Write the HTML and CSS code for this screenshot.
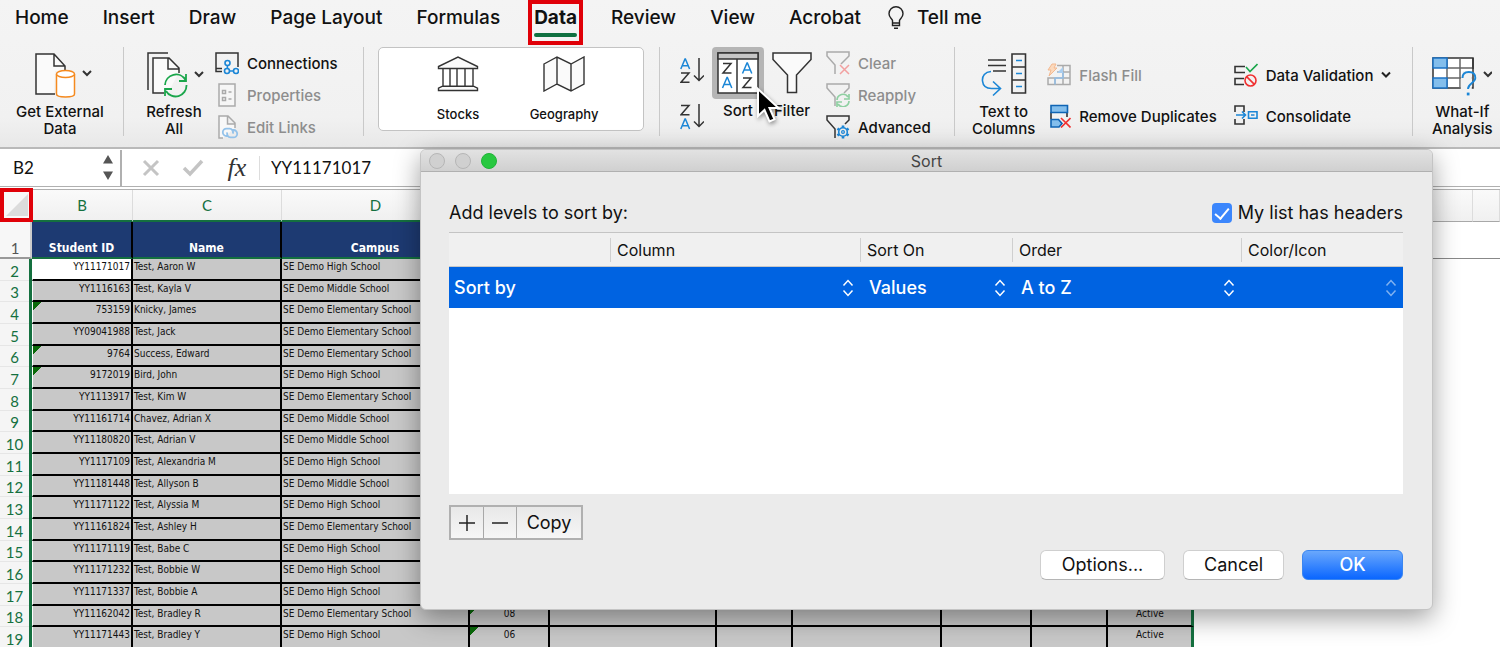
FILE: index.html
```html
<!DOCTYPE html>
<html lang="en">
<head>
<meta charset="utf-8">
<title>Sort</title>
<link rel="stylesheet" href="styles.css">
</head>
<body>
<header class="ribbon">
  <nav class="tabs">
    <button class="tab">Home</button>
    <button class="tab">Insert</button>
    <button class="tab">Draw</button>
    <button class="tab">Page Layout</button>
    <button class="tab">Formulas</button>
    <button class="tab active">Data</button>
    <button class="tab">Review</button>
    <button class="tab">View</button>
    <button class="tab">Acrobat</button>
    <button class="tab tell"><svg width="18" height="24" viewBox="0 0 18 24" fill="none" stroke="#222" stroke-width="1.4"><path d="M5.5 17v-2.500C5 12.500 2 11.500 2 7.800a7 7 0 0 1 14 0c0 3.700-3 4.700-3.500 6.700V17zM5.500 17v2.500h7V17M7 22.300h4"/></svg>Tell me</button>
  </nav>
  <div class="groups">
    <section class="group g-external">
      <button class="big">
        <svg width="58" height="46" viewBox="0 0 58 46" fill="none" stroke="#333" stroke-width="1.5"><path d="M19 42H1V2h18l11 11v6H20" fill="#fafafa" stroke="none"/><path d="M20 42H1V2h18l11 12v4M19 2v12h11"/><path d="M21.500 22v20c0 4 18 4 18 0V22" fill="#fff" stroke="#f58a1f"/><ellipse cx="30.500" cy="22" rx="9" ry="3.500" fill="#fff" stroke="#f58a1f"/><path d="m48 19 4 4 4-4" stroke-width="2"/></svg>
        <span>Get External<br>Data</span>
      </button>
    </section>
    <section class="group g-refresh">
      <button class="big">
        <svg width="58" height="46" viewBox="0 0 58 46" fill="none" stroke="#333" stroke-width="1.500"><path d="M1 38V1h20"/><path d="M21 41H6V6h16l10 10v4L21 41" fill="#fafafa" stroke="none"/><path d="M17 41H6V6h16l10 10v5M21 6v11h11"/><path d="M18 33a11 11 0 0 1 20.500-5M39 22v7h-7M39.500 33A11 11 0 0 1 19 39M18 44v-7h7" stroke="#1aa64b" stroke-width="1.800"/><path d="m48 20 4 4 4-4" stroke-width="2"/></svg>
        <span>Refresh<br>All</span>
      </button>
      <div class="list">
        <button class="small"><svg width="24" height="24" viewBox="0 0 24 24" fill="none" stroke="#333" stroke-width="1.500"><path d="M7 20.500H1V2h22v14M1 17.500h6"/><g stroke="#1b86d6" stroke-width="1.600"><circle cx="12.500" cy="12" r="2.500"/><circle cx="12" cy="20" r="2.500"/><circle cx="21" cy="20" r="2.500"/><path d="M12.400 14.500v3M14.500 20h4"/></g></svg>Connections</button>
        <button class="small" disabled><svg width="24" height="24" viewBox="0 0 24 24" fill="none" stroke="#aaa" stroke-width="1.500"><path d="M4 1h16v22H4z" fill="#f6f6f6"/><path d="M7.500 7.500h3v3h-3zM7.500 14.500h3v3h-3zM13.500 9h3M13.500 16h3"/></svg>Properties</button>
        <button class="small" disabled><svg width="24" height="24" viewBox="0 0 24 24" fill="none" stroke="#aaa" stroke-width="1.500"><path d="M8 23H4V1h9l7 7v5M12.500 1v8H20" fill="#f8f8f8"/><path d="M13 21h-1.500a3.700 3.700 0 0 1 0-7.400h3a3.700 3.700 0 0 1 3.300 5M16.500 15h2a3.700 3.700 0 0 1 0 7.400h-3a3.700 3.700 0 0 1-3.200-5" stroke="#93c2ea" stroke-width="1.800"/></svg>Edit Links</button>
      </div>
    </section>
    <section class="group g-types">
      <div class="gallery">
        <button class="type"><svg width="42" height="36" viewBox="0 0 42 36" fill="#fafafa" stroke="#333" stroke-width="1.400"><path d="M1.500 12.500v-2L21 1l19.500 9.500v2zM6 13v17M13 13v17M20 13v17M28 13v17M36 13v17M1.500 34.500v-2.300l4-2h31l4 2v2.300z"/></svg>Stocks</button>
        <button class="type"><svg width="42" height="36" viewBox="0 0 42 36" fill="#fafafa" stroke="#333" stroke-width="1.400"><path d="M1 8l13-7 14 7 13-7v27l-13 7-14-7-13 7zM14 1v27M28 8v27"/></svg>Geography</button>
      </div>
    </section>
    <section class="group g-sort">
      <div class="quick">
        <button class="az" aria-label="Sort ascending"><svg width="24" height="26" viewBox="0 0 24 26" fill="none" stroke="#333" stroke-width="1.500"><path d="M.8 11 5 1h.4l4.200 10M2.200 7.700h6" stroke="#1b86d6"/><path d="M1 15h8L1 24.300h8.500M19 0v22M14 17.500l5 5 5-5"/></svg></button>
        <button class="az" aria-label="Sort descending"><svg width="24" height="26" viewBox="0 0 24 26" fill="none" stroke="#333" stroke-width="1.500"><path d="M1 1.500h8L1 10.800h8.500M19 0v22M14 17.500l5 5 5-5"/><path d="M.8 25 5 15h.4l4.200 10M2.200 21.700h6" stroke="#1b86d6"/></svg></button>
      </div>
      <button class="tool"><span class="pressed"><svg width="42" height="42" viewBox="0 0 42 42" fill="none" stroke="#333" stroke-width="1.500"><path d="M1 1h40v40H1z" fill="#fff"/><path d="M1 1h40v6H1z" fill="#c6c6c6"/><path d="M20 7v34M6 11.500h8L6 21h8.500M26 26h8l-8 9.500h8.500"/><path d="M5.500 36 10 25.500h.4L14.800 36M7 32.500h6.500M25.500 21.500 30 11h.4l4.400 10.500M27 18h6.500" stroke="#1b86d6"/></svg></span><span>Sort</span></button>
      <button class="tool"><span class="plain"><svg width="40" height="42" viewBox="0 0 40 42" fill="#fafafa" stroke="#333" stroke-width="1.500"><path d="M1 1h38v6.500L24.500 23v17.500h-9V23L1 7.500z"/></svg></span><span>Filter</span></button>
      <div class="list">
        <button class="small" disabled><svg width="24" height="24" viewBox="0 0 24 24" fill="none" stroke="#aaa" stroke-width="1.500"><path d="M9 23v-9L1 5V1h22v4l-8 8"/><path d="m14 14 9 9M23 14l-9 9" stroke="#f2a0a0"/></svg>Clear</button>
        <button class="small" disabled><svg width="24" height="24" viewBox="0 0 24 24" fill="none" stroke="#aaa" stroke-width="1.500"><path d="M9 23v-9L1 5V1h22v4l-5 5"/><path d="M11 17a6 6 0 0 1 11-3M23 11v5h-5M23 18a6 6 0 0 1-11 3M11 24v-5h5" stroke="#8fd0a2" stroke-width="1.700"/></svg>Reapply</button>
        <button class="small"><svg width="24" height="24" viewBox="0 0 24 24" fill="none" stroke="#333" stroke-width="1.500"><path d="M9 23v-9L1 5V1h22v4l-4 4"/><g stroke="#1b86d6"><circle cx="17" cy="17" r="4.300" stroke-width="1.600"/><circle cx="17" cy="17" r="1.400" stroke-width="1.200"/><path d="M17 10.500v2M17 21.500v2M11.400 13.700l1.700 1M20.900 19.300l1.700 1M11.400 20.300l1.700-1M20.900 14.700l1.700-1" stroke-width="2.600"/></g></svg>Advanced</button>
      </div>
    </section>
    <section class="group g-tools">
      <button class="big">
        <svg width="46" height="46" viewBox="0 0 46 46" fill="none" stroke="#333" stroke-width="1.600"><path d="M7 8h18M7 13.500h18M12 19h13M31 2h13.500v39H31zM31 15h13.500M31 28h13.500" /><path d="M35 8.500h6M35 21.500h6M35 34.500h6M10 19.500C4 20 1 24 1.500 29s4 7.500 9 7.500h8.500M12 29.500l7.500 7-7.500 7" stroke="#1b86d6"/></svg>
        <span>Text to<br>Columns</span>
      </button>
      <div class="list pair">
        <button class="small" disabled><svg width="24" height="24" viewBox="0 0 24 24" fill="none" stroke="#aaa" stroke-width="1.500"><path d="M10 2.500h13v19H1V15h22M8 15v6.500M16 2.500v19M10 9h13"/><path d="M8 21.500V15h8V9" stroke="#93bfe8"/><path d="m10 10 6-6v6z" fill="#a9cdef" stroke="none"/><path d="M5 1h4L7 5h3l-8 8 2-6H1z" fill="#fbd9bd" stroke="#f3b990" stroke-width="1"/></svg>Flash Fill</button>
        <button class="small"><svg width="24" height="24" viewBox="0 0 24 24" fill="none" stroke="#0f64b4" stroke-width="1.600"><path d="M4 8v7M20 8v5" stroke="#333"/><path d="M4 1.500h16.500v7H4zM4 15.500h7.500l3.500 4-3 3.500H4z" fill="#83beec"/><path d="m14 14 9.500 9.500M23.500 14 14 23.500" stroke="#f03030"/></svg>Remove Duplicates</button>
      </div>
      <div class="list pair wide">
        <button class="small"><svg width="24" height="24" viewBox="0 0 24 24" fill="none" stroke="#333" stroke-width="1.600"><path d="M11 3.500H1v6h10M10 15.500H1v6h9"/><path d="m12 4 4 4.500 7.500-7.500" stroke="#1aa64b"/><circle cx="16.500" cy="17.500" r="5.500" stroke="#f03030"/><path d="m12.600 13.600 7.800 7.800" stroke="#f03030"/></svg>Data Validation<svg class="chev" width="10" height="8" viewBox="0 0 10 8" fill="none" stroke="#222" stroke-width="2"><path d="m1 1.500 4 4 4-4"/></svg></button>
        <button class="small"><svg width="24" height="24" viewBox="0 0 24 24" fill="none" stroke="#333" stroke-width="1.600"><path d="M1 8V2h9v6M1 15v5h9v-5"/><path d="M2 11h9M8 7.500l3.500 3.500L8 14.500M14.500 7.800H23v6.500h-8.500zM17 11h3.500" stroke="#1b86d6"/></svg>Consolidate</button>
      </div>
    </section>
    <section class="group g-whatif">
      <button class="big">
        <svg width="60" height="46" viewBox="0 0 60 46" fill="none" stroke="#333" stroke-width="1.500"><path d="M1 6h40v30H1z" fill="#fff"/><path d="M15 16h26M15 26h26M28 6v30M15 6v30" stroke="#666"/><path d="M1 6h14v10H1zM1 26h14v10H1z" fill="#83beec" stroke="#1b72c4"/><path d="M28.800 37V27l2-8h9v18z" fill="#f2f2f2" stroke="none"/><path d="M41 6v11"/><path d="M30.500 26c0-4 2.500-6 6.300-6 3.700 0 6.500 2 6.500 6 0 5-7.300 5-7.300 11" stroke="#1b86d6" stroke-width="1.900"/><path d="M34.800 42h2.700" stroke="#1b86d6" stroke-width="2.800"/><path d="m52 20 4 4 4-4" stroke-width="2"/></svg>
        <span>What-If<br>Analysis</span>
      </button>
    </section>
  </div>
</header>

<div class="formula-bar">
  <div class="name-box"><input type="text" value="B2" aria-label="Name box"><svg width="12" height="26" viewBox="0 0 12 26" fill="#555"><path d="M6 0l5 8.500H1zM6 25l5-8.500H1z"/></svg></div>
  <button class="fb" aria-label="Cancel entry"><svg width="18" height="18" viewBox="0 0 18 18" fill="none" stroke="#c4c4c4" stroke-width="3"><path d="M2 2l14 14M16 2 2 16"/></svg></button>
  <button class="fb" aria-label="Accept entry"><svg width="22" height="18" viewBox="0 0 22 18" fill="none" stroke="#c4c4c4" stroke-width="3.500"><path d="m2 9 6 6L20 2"/></svg></button>
  <button class="fb fx">fx</button>
  <input class="formula" type="text" value="YY11171017" aria-label="Formula">
</div>

<main class="sheet">
<table class="grid">
  <colgroup><col class="c-num"><col class="c-b"><col class="c-c"><col class="c-d"><col class="c-e"><col class="c-f"><col class="c-g"><col class="c-h"><col class="c-i"><col class="c-j"><col class="c-k"><col class="c-l"><col></colgroup>
  <thead>
    <tr class="letters"><th class="corner"><button aria-label="Select all"><svg width="22" height="22" viewBox="0 0 22 22"><path d="M22 0v22H0z" fill="#dcdcdc"/></svg></button></th><th>B</th><th>C</th><th>D</th><th></th><th></th><th></th><th></th><th></th><th></th><th></th><th class="off"></th><th class="off"></th></tr>
    <tr class="titles"><th class="num">1</th><td>Student ID</td><td>Name</td><td>Campus</td><td></td><td></td><td></td><td></td><td></td><td></td><td></td><td class="off"></td><td class="off"></td></tr>
  </thead>
  <tbody>
    <tr><th>2</th><td class="current">YY11171017</td><td>Test, Aaron W</td><td>SE Demo High School</td><td></td><td></td><td></td><td></td><td></td><td></td><td></td></tr>
    <tr><th>3</th><td>YY1116163</td><td>Test, Kayla V</td><td>SE Demo Middle School</td><td></td><td></td><td></td><td></td><td></td><td></td><td></td></tr>
    <tr><th>4</th><td class="flag">753159</td><td>Knicky, James</td><td>SE Demo Elementary School</td><td></td><td></td><td></td><td></td><td></td><td></td><td></td></tr>
    <tr><th>5</th><td>YY09041988</td><td>Test, Jack</td><td>SE Demo Elementary School</td><td></td><td></td><td></td><td></td><td></td><td></td><td></td></tr>
    <tr><th>6</th><td class="flag">9764</td><td>Success, Edward</td><td>SE Demo Elementary School</td><td></td><td></td><td></td><td></td><td></td><td></td><td></td></tr>
    <tr><th>7</th><td class="flag">9172019</td><td>Bird, John</td><td>SE Demo High School</td><td></td><td></td><td></td><td></td><td></td><td></td><td></td></tr>
    <tr><th>8</th><td>YY1113917</td><td>Test, Kim W</td><td>SE Demo Elementary School</td><td></td><td></td><td></td><td></td><td></td><td></td><td></td></tr>
    <tr><th>9</th><td>YY11161714</td><td>Chavez, Adrian X</td><td>SE Demo Middle School</td><td></td><td></td><td></td><td></td><td></td><td></td><td></td></tr>
    <tr><th>10</th><td>YY11180820</td><td>Test, Adrian V</td><td>SE Demo Middle School</td><td></td><td></td><td></td><td></td><td></td><td></td><td></td></tr>
    <tr><th>11</th><td>YY1117109</td><td>Test, Alexandria M</td><td>SE Demo High School</td><td></td><td></td><td></td><td></td><td></td><td></td><td></td></tr>
    <tr><th>12</th><td>YY11181448</td><td>Test, Allyson B</td><td>SE Demo Middle School</td><td></td><td></td><td></td><td></td><td></td><td></td><td></td></tr>
    <tr><th>13</th><td>YY11171122</td><td>Test, Alyssia M</td><td>SE Demo High School</td><td></td><td></td><td></td><td></td><td></td><td></td><td></td></tr>
    <tr><th>14</th><td>YY11161824</td><td>Test, Ashley H</td><td>SE Demo Elementary School</td><td></td><td></td><td></td><td></td><td></td><td></td><td></td></tr>
    <tr><th>15</th><td>YY11171119</td><td>Test, Babe C</td><td>SE Demo High School</td><td></td><td></td><td></td><td></td><td></td><td></td><td></td></tr>
    <tr><th>16</th><td>YY11171232</td><td>Test, Bobbie W</td><td>SE Demo High School</td><td></td><td></td><td></td><td></td><td></td><td></td><td></td></tr>
    <tr><th>17</th><td>YY11171337</td><td>Test, Bobbie A</td><td>SE Demo High School</td><td></td><td></td><td></td><td></td><td></td><td></td><td></td></tr>
    <tr><th>18</th><td>YY11162042</td><td>Test, Bradley R</td><td>SE Demo Elementary School</td><td class="flag">08</td><td></td><td></td><td></td><td></td><td></td><td>Active</td></tr>
    <tr><th>19</th><td>YY11171443</td><td>Test, Bradley Y</td><td>SE Demo High School</td><td class="flag">06</td><td></td><td></td><td></td><td></td><td></td><td>Active</td></tr>
  </tbody>
</table>
</main>

<div class="dialog" role="dialog" aria-labelledby="dlg-title">
  <div class="titlebar"><div class="lights"><button class="light" aria-label="Close"></button><button class="light" aria-label="Minimize"></button><button class="light zoom" aria-label="Zoom"></button></div><span id="dlg-title">Sort</span></div>
  <div class="dialog-body">
    <div class="intro"><span>Add levels to sort by:</span><label for="hdr"><input id="hdr" type="checkbox" checked>My list has headers</label></div>
    <div class="levels">
      <table>
        <colgroup><col class="l-a"><col class="l-b"><col class="l-c"><col class="l-d"><col class="l-e"></colgroup>
        <thead><tr><th></th><th><span>Column</span></th><th><span>Sort On</span></th><th><span>Order</span></th><th><span>Color/Icon</span></th></tr></thead>
        <tbody><tr>
          <td class="lead">Sort by</td>
          <td><div class="pick"><select aria-label="Column"><option></option></select><svg width="12" height="18" viewBox="0 0 12 18"><path d="m1.500 6.500 4.500-5 4.500 5M1.500 11.500l4.500 5 4.500-5"/></svg></div></td>
          <td><div class="pick"><select aria-label="Sort On"><option>Values</option></select><svg width="12" height="18" viewBox="0 0 12 18"><path d="m1.500 6.500 4.500-5 4.500 5M1.500 11.500l4.500 5 4.500-5"/></svg></div></td>
          <td><div class="pick"><select aria-label="Order"><option>A to Z</option></select><svg width="12" height="18" viewBox="0 0 12 18"><path d="m1.500 6.500 4.500-5 4.500 5M1.500 11.500l4.500 5 4.500-5"/></svg></div></td>
          <td><div class="pick dim"><select aria-label="Color/Icon" disabled><option></option></select><svg width="12" height="18" viewBox="0 0 12 18"><path d="m1.500 6.500 4.500-5 4.500 5M1.500 11.500l4.500 5 4.500-5"/></svg></div></td>
        </tr></tbody>
      </table>
    </div>
    <div class="edit">
      <button aria-label="Add level"><svg width="16" height="16" viewBox="0 0 16 16" stroke="#222" stroke-width="1.500"><path d="M0 8h16M8 0v16"/></svg></button>
      <button aria-label="Remove level"><svg width="16" height="16" viewBox="0 0 16 16" stroke="#222" stroke-width="1.500"><path d="M0 8h16"/></svg></button>
      <button class="copy">Copy</button>
    </div>
    <div class="actions"><button class="options">Options...</button><button>Cancel</button><button class="ok">OK</button></div>
  </div>
</div>
<svg class="pointer" width="28" height="40" viewBox="0 0 28 40"><path d="M3 3v27l6.500-6 5 11.500 5-2.200-5-11.300h9z" fill="#000" stroke="#fff" stroke-width="2"/></svg>
</body>
</html>
```
FILE: styles.css
```css
*, *::before, *::after { box-sizing: border-box; }
body { margin: 0; height: 100vh; overflow: hidden; position: relative; background: #fff; color: #111; font-family: Inter, "Liberation Sans", sans-serif; display: flex; flex-direction: column; }
button { border: 0; padding: 0; margin: 0; background: none; color: inherit; font: inherit; }
input, select { font: inherit; color: inherit; border: 0; margin: 0; padding: 0; background: none; }
svg { flex: none; }

.ribbon { flex: none; height: 149px; background: linear-gradient(#f4f4f4, #f1f1f1 80%, #e8e8e8); border-bottom: 2px solid #b9b9b9; }
.tabs { display: flex; gap: 34px; height: 47px; padding: 0 15px; align-items: flex-start; }
.tab { font-size: 19px; font-weight: 500; line-height: 36px; white-space: nowrap; position: relative; }
.tab.active { font-weight: 700; }
.tab.active::before { content: ""; position: absolute; left: 0; right: 0; top: 33px; height: 4px; border-radius: 2px; background: #107040; }
.tab.active::after { content: ""; position: absolute; left: -6px; right: -6px; top: 0; height: 45px; border: 4px solid #e00008; }
.tell { display: flex; align-items: center; gap: 12px; margin-left: -8px; }

.groups { display: flex; height: 91px; }
.group { display: flex; position: relative; flex: none; font-size: 15px; font-weight: 500; }
.group::after { content: ""; position: absolute; right: 0; top: 0; width: 1px; height: 89px; background: #c9c9c9; }
.g-external { width: 124px; padding-left: 16px; }
.g-refresh { width: 240px; padding-left: 19px; }
.g-types { width: 296px; padding: 0 16px 0 14px; }
.g-sort { width: 295px; padding-left: 20px; }
.g-tools { width: 458px; padding-left: 17px; }
.g-whatif { padding-left: 19px; }
.g-whatif::after { display: none; }
.big { display: flex; flex-direction: column; align-items: center; line-height: 17px; white-space: nowrap; padding-top: 5px; gap: 5px; }
.g-external .big svg { margin-left: 8px; }
.g-refresh .big svg { margin-left: 4px; }
.list { display: flex; flex-direction: column; margin-left: 12px; }
.small { flex: none; display: flex; align-items: center; gap: 8px; height: 32px; white-space: nowrap; }
.small:disabled { color: #8d8d8d; }
.list.pair { padding-top: 12px; gap: 9px; }
.list.wide { margin-left: 17px; }
.g-refresh .list { margin-left: 10px; }
.gallery { flex: 1; height: 84px; display: flex; justify-content: center; gap: 34px; background: #fff; border: 1px solid #c3c3c3; border-radius: 5px; }
.type { display: flex; flex-direction: column; align-items: center; gap: 12px; width: 72px; padding-top: 8px; font-size: 13px; line-height: 20px; }
.quick { display: flex; flex-direction: column; gap: 20px; padding-top: 11px; width: 32px; }
.az { height: 26px; width: 24px; }
.tool { display: flex; flex-direction: column; align-items: center; gap: 2px; line-height: 20px; }
.pressed { display: grid; place-items: center; width: 52px; height: 52px; border-radius: 4px; background: #b5b5b5; }
.plain { display: grid; place-items: center; width: 56px; height: 52px; }
.g-sort .list { margin-left: 6px; }

.formula-bar { flex: none; height: 38px; display: flex; align-items: center; border-bottom: 1px solid #b0b0b0; font-family: Lato, Inter, sans-serif; background: #fff; }
.name-box { display: flex; align-items: center; justify-content: space-between; width: 122px; height: 36px; padding: 0 6px 0 13px; border-right: 2px solid #b0b0b0; }
.name-box input { width: 60px; font-size: 17px; }
.fb { width: 24px; margin-left: 18px; display: grid; place-items: center; }
.fb.fx { font: italic 26px/30px "Liberation Serif", serif; color: #333; margin-left: 20px; }
.name-box + .fb { margin-left: 17px; }
.formula { flex: 1; height: 24px; margin-left: 10px; padding-left: 11px; border-left: 1px solid #ddd; font-size: 17px; }

.sheet { flex: none; border-top: 1px solid #b0b0b0; margin-top: 2px; }
.grid { table-layout: fixed; width: 100%; border-spacing: 0; font: 10px/16px "DejaVu Sans Condensed", "Noto Sans", sans-serif; color: #111; }
.c-num { width: 32px; } .c-b { width: 101px; } .c-c { width: 149px; } .c-d { width: 188px; } .c-e { width: 80px; } .c-f { width: 167px; } .c-g { width: 76px; } .c-h { width: 149px; } .c-i { width: 90px; } .c-j { width: 76px; } .c-k { width: 86px; } .c-l { width: 279px; }
.grid th, .grid td { padding: 0; white-space: nowrap; }
.letters th { height: 32px; font: 15px/20px Lato, Inter, sans-serif; color: #14703f; background: linear-gradient(#fafafa, #f0f0f0); border-bottom: 2px solid #14703f; border-right: 1px solid #dcdcdc; }
.letters .off { border-bottom: 1px solid #a8a8a8; }
.letters .corner { border: 0; position: relative; }
.corner button { position: absolute; left: 0; top: -2px; width: 33px; height: 34px; border: 4px solid #e00008; background: #f8f8f8; display: grid; place-items: end; padding: 2px; }
.titles td { height: 37px; background: #1d3a72; color: #fff; font-family: "DejaVu Sans Condensed", "Noto Sans", sans-serif; font-size: 12px; font-weight: 700; text-align: center; vertical-align: bottom; border-right: 2px solid #000; border-bottom: 2px solid #14703f; padding-bottom: 1px; }
.titles td:nth-child(11) { border-right: 3px solid #14703f; }
.titles .off, .titles td.off { background: #fff; border-right: 0; border-bottom: 1px solid #888; }
.grid .num { font: 15px/18px Lato, Inter, sans-serif; color: #555; vertical-align: bottom; background: #f7f7f7; border-right: 2px solid #ccc; border-bottom: 2px solid #999; }
.grid tbody tr { height: 22px; }
.grid tbody tr:nth-child(3n+2) { height: 21px; }
.grid tbody th { font: 15px/18px Lato, Inter, sans-serif; color: #14703f; background: #f5f5f5; border-right: 3px solid #14703f; vertical-align: bottom; padding-bottom: 1px; box-shadow: inset 0 -1px #e6e6e6; }
.grid tbody td { background-color: #c8c8c8; border-right: 2px solid #000; border-bottom: 2px solid #000; vertical-align: top; padding-left: 1px; line-height: 16px; }
.grid tbody td:nth-child(2) { text-align: right; border-left: 1px solid #fff; padding-right: 1px; }
.grid tbody td:nth-child(5), .grid tbody td:nth-child(11) { text-align: center; }
.grid tbody td:nth-child(11) { border-right: 3px solid #14703f; }
.grid tbody .current { background: #fff; }
.grid tbody .flag { background-image: linear-gradient(135deg, #0a6a0a 6px, transparent 6px); }

.dialog { position: absolute; left: 420px; right: 67px; top: 149px; height: 461px; border-radius: 6px; background: #ebebeb; border: 1px solid #c4c4c4; box-shadow: 0 8px 26px rgba(0, 0, 0, .38); overflow: hidden; }
.titlebar { display: grid; grid-template-columns: 1fr auto 1fr; align-items: center; height: 22px; background: linear-gradient(#e2e2e2, #d0d0d0); border-bottom: 1px solid #b0b0b0; font-size: 16px; line-height: 20px; color: #444; }
.lights { display: flex; gap: 10px; padding-left: 8px; }
.light { width: 16px; height: 16px; border-radius: 50%; background: #d0d0d0; border: 1px solid #b5b5b5; }
.light.zoom { background: #28c840; border-color: #20b338; }
.dialog-body { padding: 29px 29px 29px 28px; font-size: 18px; line-height: 24px; }
.intro { display: flex; justify-content: space-between; }
.intro label { display: flex; align-items: center; gap: 6px; }
.intro input { appearance: none; width: 20px; height: 20px; border-radius: 4px; background: #3b86fc; display: grid; place-items: center; }
.intro input::before { content: ""; width: 8px; height: 14px; margin-top: -3px; border: solid #fff; border-width: 0 2px 2px 0; transform: rotate(40deg); }
.levels { margin-top: 7px; height: 262px; background: #fff; border-top: 1px solid #c4c4c4; }
.levels table { width: 100%; table-layout: fixed; border-spacing: 0; }
.l-a { width: 161px; } .l-b { width: 250px; } .l-c { width: 152px; } .l-d { width: 229px; }
.levels th { height: 34px; padding: 0; background: #f0f0f0; border-bottom: 1px solid #c8c8c8; text-align: left; font-size: 16px; font-weight: 400; }
.levels th span { display: block; border-left: 1px solid #cfcfcf; padding-left: 6px; line-height: 24px; }
.levels td { height: 41px; padding: 0; background: #0063e1; color: #fff; font-weight: 500; }
.levels .lead { padding-left: 5px; }
.pick { display: flex; align-items: center; padding: 0 6px 0 9px; }
.pick select { appearance: none; flex: 1; min-width: 0; opacity: 1; }
.pick svg { fill: none; stroke: #fff; stroke-width: 1.5; }
.pick.dim svg { opacity: .5; }
.edit { display: flex; width: max-content; margin-top: 11px; border: 2px solid #b0b0b0; }
.edit button { width: 33px; height: 31px; display: grid; place-items: center; background: linear-gradient(#e8e8e8, #f6f6f6); border-right: 1px solid #a8a8a8; }
.edit .copy { width: 64px; border: 0; }
.actions { display: flex; justify-content: flex-end; gap: 18px; margin-top: 10px; }
.actions button { min-width: 101px; height: 30px; border-radius: 6px; background: #fff; border: 1px solid #cfcfcf; border-bottom-color: #b5b5b5; }
.actions .options { min-width: 125px; }
.actions .ok { background: linear-gradient(#6aa8fc, #0a66ff); border-color: #3b86f0; color: #fff; font-weight: 500; }
.pointer { position: absolute; left: 755px; top: 86px; filter: drop-shadow(1px 2px 2px rgba(0, 0, 0, .4)); }
```
